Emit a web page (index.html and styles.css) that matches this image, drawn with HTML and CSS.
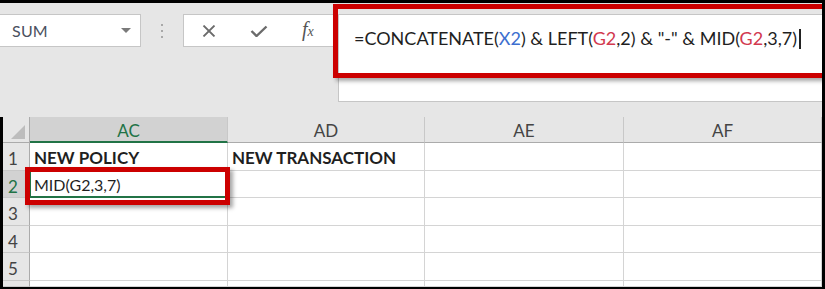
FILE: index.html
```html
<!DOCTYPE html>
<html>
<head>
    <meta charset="utf-8">
    <title>Formula bar</title>
    <link rel="stylesheet" href="styles.css">
</head>
<body>
    <div id="frame">
        <div id="toolbar">
            <div id="name-box">
                <span class="name">SUM</span>
                <span class="caret"></span>
            </div>
            <div class="grip"><i></i><i></i><i></i></div>
            <div id="fx-box">
                <div class="btns">
                    <svg width="18" height="12" viewBox="0 0 18 12"><path d="M3.5 0.5 L14.5 11.5 M14.5 0.5 L3.5 11.5" stroke="#6b6b6b" stroke-width="1.8" fill="none"/></svg>
                    <svg width="18" height="12" viewBox="0 0 18 12"><path d="M1.5 6 L6.5 11 L16.5 1.5" stroke="#6b6b6b" stroke-width="2.4" fill="none"/></svg>
                    <span class="fx"><i>f</i><i class="x">x</i></span>
                </div>
                <div id="formula">
                    <p>=CONCATENATE(<span class="ref-blue">X2</span>) &amp; LEFT(<span class="ref-red">G2</span>,2) &amp; "-" &amp; MID(<span class="ref-red">G2</span>,3,7)<span class="cursor"></span></p>
                </div>
            </div>
            <div class="callout callout-formula"></div>
        </div>

        <div id="sheet">
            <div class="grid">
                <div class="hdr corner"><span class="tri"></span></div>
                <div class="hdr col sel">AC</div>
                <div class="hdr col">AD</div>
                <div class="hdr col">AE</div>
                <div class="hdr col">AF</div>

                <div class="hdr row">1</div>
                <div class="cell bold">NEW POLICY</div>
                <div class="cell bold">NEW TRANSACTION</div>
                <div class="cell"></div>
                <div class="cell"></div>

                <div class="hdr row sel">2</div>
                <div class="cell active">MID(G2,3,7)</div>
                <div class="cell"></div>
                <div class="cell"></div>
                <div class="cell"></div>

                <div class="hdr row">3</div>
                <div class="cell"></div>
                <div class="cell"></div>
                <div class="cell"></div>
                <div class="cell"></div>

                <div class="hdr row">4</div>
                <div class="cell"></div>
                <div class="cell"></div>
                <div class="cell"></div>
                <div class="cell"></div>

                <div class="hdr row">5</div>
                <div class="cell"></div>
                <div class="cell"></div>
                <div class="cell"></div>
                <div class="cell"></div>

                <div class="hdr row"></div>
                <div class="cell"></div>
                <div class="cell"></div>
                <div class="cell"></div>
                <div class="cell"></div>
            </div>
            <div class="callout callout-cell"></div>
        </div>
    </div>
</body>
</html>
```

FILE: styles.css
```css
html, body {
    margin: 0px;
    padding: 0px;
    background-color: #000000;
    width: 825px;
    height: 289px;
    overflow: hidden;
}
#frame {
    position: relative;
    width: 822px;
    height: 285px;
    margin-top: 3px;
    overflow: hidden;
    font-family: "Lato", "Liberation Sans", sans-serif;
    color: #1f1f1f;
}

/* ---------- formula bar area ---------- */
#toolbar {
    position: relative;
    height: 114px;
    background-color: #e6e6e6;
    display: flex;
    align-items: flex-start;
    padding-top: 11px;
    box-sizing: border-box;
}
#name-box {
    width: 141px;
    height: 33px;
    background-color: #ffffff;
    border: 1px solid #c6c6c6;
    border-left: none;
    display: flex;
    align-items: center;
    justify-content: space-between;
    padding: 0px 9px 0px 12px;
    box-sizing: border-box;
}
#name-box .name {
    font-size: 16px;
    color: #4a5060;
    letter-spacing: 0.2px;
}
#name-box .caret {
    width: 0px;
    height: 0px;
    border-left: 5px solid transparent;
    border-right: 5px solid transparent;
    border-top: 5px solid #7a7a7a;
}
.grip {
    width: 42px;
    height: 33px;
    display: flex;
    flex-direction: column;
    align-items: center;
    justify-content: center;
    gap: 4px;
}
.grip i {
    width: 2px;
    height: 2px;
    background-color: #a8a8a8;
}
#fx-box {
    flex: 1;
    display: flex;
    align-items: flex-start;
}
.btns {
    width: 155px;
    height: 33px;
    background-color: #ffffff;
    border: 1px solid #c6c6c6;
    border-right: none;
    display: flex;
    align-items: center;
    gap: 32px;
    padding-left: 16px;
    box-sizing: border-box;
}
.fx {
    font-family: "Liberation Serif", serif;
    font-size: 20px;
    color: #555555;
    margin-left: 2px;
    margin-top: -2px;
}
.fx .x {
    font-size: 14px;
}
#formula {
    flex: 1;
    height: 88px;
    background-color: #ffffff;
    border: 1px solid #c6c6c6;
    border-right: none;
    box-sizing: border-box;
}
#formula p {
    margin: 0px;
    padding: 12px 0px 0px 15px;
    font-size: 18px;
    letter-spacing: 0px;
    white-space: nowrap;
    color: #1f1f1f;
}
.ref-blue {
    color: #3d6fcf;
}
.ref-red {
    color: #d2394f;
}
.cursor {
    display: inline-block;
    width: 2px;
    height: 20px;
    margin-left: 2px;
    vertical-align: -4px;
    background-color: #222222;
}

/* red annotation boxes */
.callout {
    position: absolute;
    border: 5px solid #cc0000;
    box-shadow: 3px 3px 4px rgba(0, 0, 0, 0.35);
    box-sizing: border-box;
}
.callout-formula {
    left: 333px;
    top: 1px;
    width: 520px;
    height: 74px;
}
.callout-cell {
    left: 22px;
    top: 50px;
    width: 205px;
    height: 38px;
}

/* ---------- sheet ---------- */
#sheet {
    position: relative;
    margin-left: 3px;
    background-color: #ffffff;
}
.grid {
    display: grid;
    grid-template-columns: 27px 198px 197px 199px 198px;
    grid-template-rows: 26px 28px 27px 28px 27px 28px 6px;
}
.hdr {
    background-color: #e6e6e6;
    color: #444444;
    font-size: 17px;
    display: flex;
    align-items: center;
    box-sizing: border-box;
}
.hdr.col {
    justify-content: center;
    border-right: 1px solid #c8c8c8;
    border-bottom: 1px solid #ababab;
    padding-top: 2px;
}
.hdr.row {
    padding-left: 5px;
    border-bottom: 1px solid #c8c8c8;
    border-right: 1px solid #ababab;
    padding-top: 4px;
}
.hdr.corner {
    border-right: 1px solid #ababab;
    border-bottom: 1px solid #ababab;
    position: relative;
}
.tri {
    position: absolute;
    right: 4px;
    bottom: 3px;
    width: 0px;
    height: 0px;
    border-left: 14px solid transparent;
    border-bottom: 14px solid #bdbdbd;
}
.hdr.sel {
    background-color: #d2d2d2;
    color: #217346;
}
.hdr.col.sel {
    border-bottom: 2px solid #217346;
}
.cell {
    border-right: 1px solid #d4d4d4;
    border-bottom: 1px solid #d4d4d4;
    font-size: 17px;
    padding: 4px 0px 0px 4px;
    box-sizing: border-box;
    white-space: nowrap;
}
.cell.bold {
    font-weight: bold;
}
.cell.active {
    font-size: 16px;
    border: 2px solid #217346;
    padding: 3px 0px 0px 3px;
    margin: -1px 0px 0px -1px;
}
```
